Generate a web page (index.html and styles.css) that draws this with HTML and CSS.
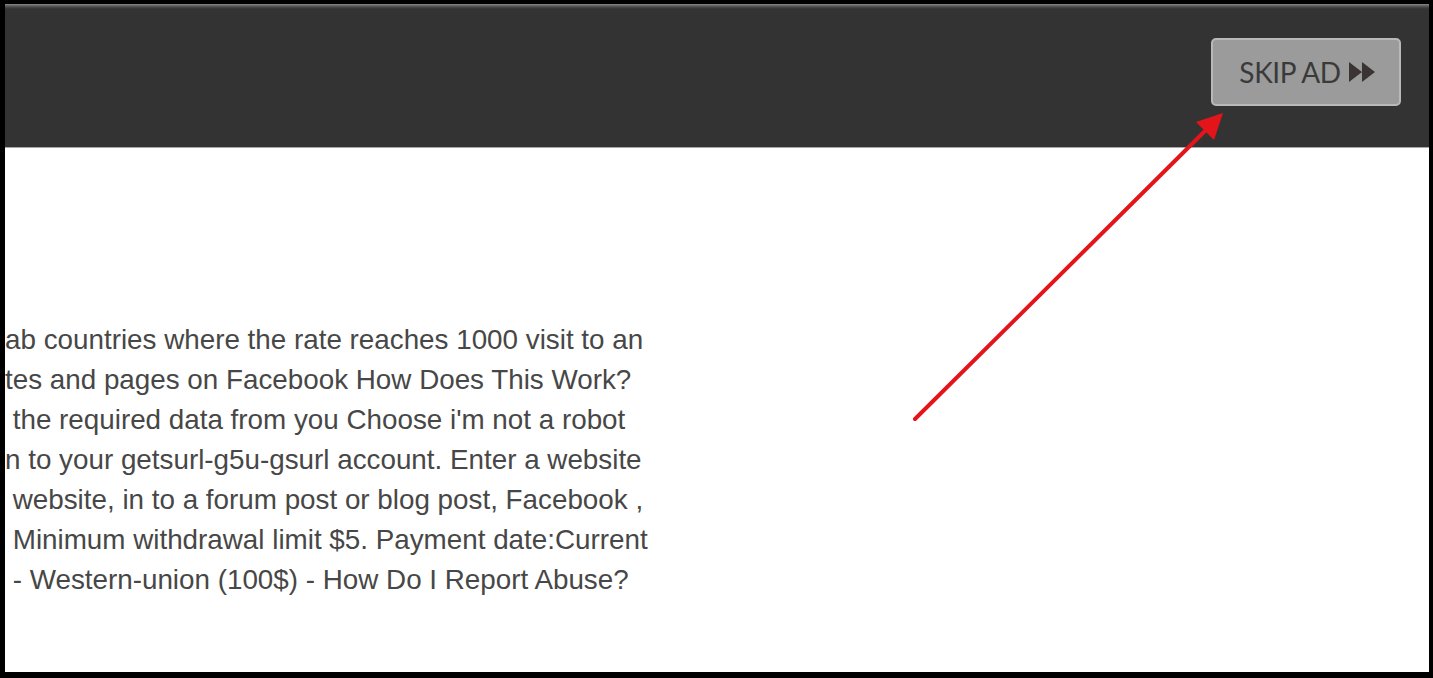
FILE: index.html
```html
<!DOCTYPE html>
<html lang="en">
  <head>
    <meta charset="UTF-8" />
    <meta name="viewport" content="width=device-width, initial-scale=1.0" />
    <title>Skip Ad</title>
    <link rel="stylesheet" href="styles.css">
  </head>
  <body>
    <div class="frame">
      <div class="topbar">
        <button class="skip-btn">
          SKIP AD
          <svg class="skip-icon" width="26" height="20" viewBox="0 0 26 20">
            <path d="M0 0 L13 10 L0 20 Z M13 0 L26 10 L13 20 Z" fill="#3a3434" />
          </svg>
        </button>
      </div>

      <div class="content">
        <p class="text">
          <span class="line">ab countries where the rate reaches 1000 visit to an</span>
          <span class="line">tes and pages on Facebook How Does This Work?</span>
          <span class="line"> the required data from you Choose i'm not a robot</span>
          <span class="line">n to your getsurl-g5u-gsurl account. Enter a website</span>
          <span class="line"> website, in to a forum post or blog post, Facebook ,</span>
          <span class="line"> Minimum withdrawal limit $5. Payment date:Current</span>
          <span class="line"> - Western-union (100$) - How Do I Report Abuse?</span>
        </p>
      </div>

      <!-- annotation arrow pointing at the button -->
      <svg class="arrow" width="1433" height="678" viewBox="0 0 1433 678">
        <line x1="915" y1="419" x2="1205" y2="131" stroke="#e3151b" stroke-width="4" stroke-linecap="round" />
        <polygon points="1223,113 1214,140 1196,122" fill="#e3151b" />
      </svg>
    </div>
  </body>
</html>
```

FILE: styles.css
```css
html,
body {
  margin: 0;
  padding: 0;
  height: 100%;
}

body {
  background-color: #000;
  overflow: hidden;
}

.frame {
  position: relative;
  margin: 4px 4px 0 5px;
  height: 668px;
  background-color: #fff;
  overflow: hidden;
}

.topbar {
  background: linear-gradient(#8a8a8a 0, #5a5a5a 2px, #3c3c3c 4px, #333 5px);
  border-bottom: 1px solid #a8a8a8;
  display: flex;
  justify-content: flex-end;
  align-items: flex-start;
  padding: 34px 28px 0 0;
  box-sizing: border-box;
  height: 144px;
}

.skip-btn {
  width: 190px;
  height: 68px;
  background-color: #9b9b9b;
  border: 2px solid #b9b9b9;
  border-radius: 5px;
  color: #3a3a3a;
  font-family: Lato, "Liberation Sans", sans-serif;
  font-size: 28px;
  letter-spacing: -0.4px;
  display: flex;
  align-items: center;
  justify-content: center;
  gap: 8px;
  padding: 0 0 0 2px;
  cursor: pointer;
}

.skip-icon {
  display: block;
}

.content {
  padding-top: 172px;
}

.text {
  margin: 0;
  font-family: "Liberation Sans", Arial, sans-serif;
  font-size: 27.8px;
  line-height: 40px;
  color: #474747;
}

.line {
  display: block;
  white-space: pre;
}

.arrow {
  position: absolute;
  left: -5px;
  top: -4px;
  pointer-events: none;
}
```
